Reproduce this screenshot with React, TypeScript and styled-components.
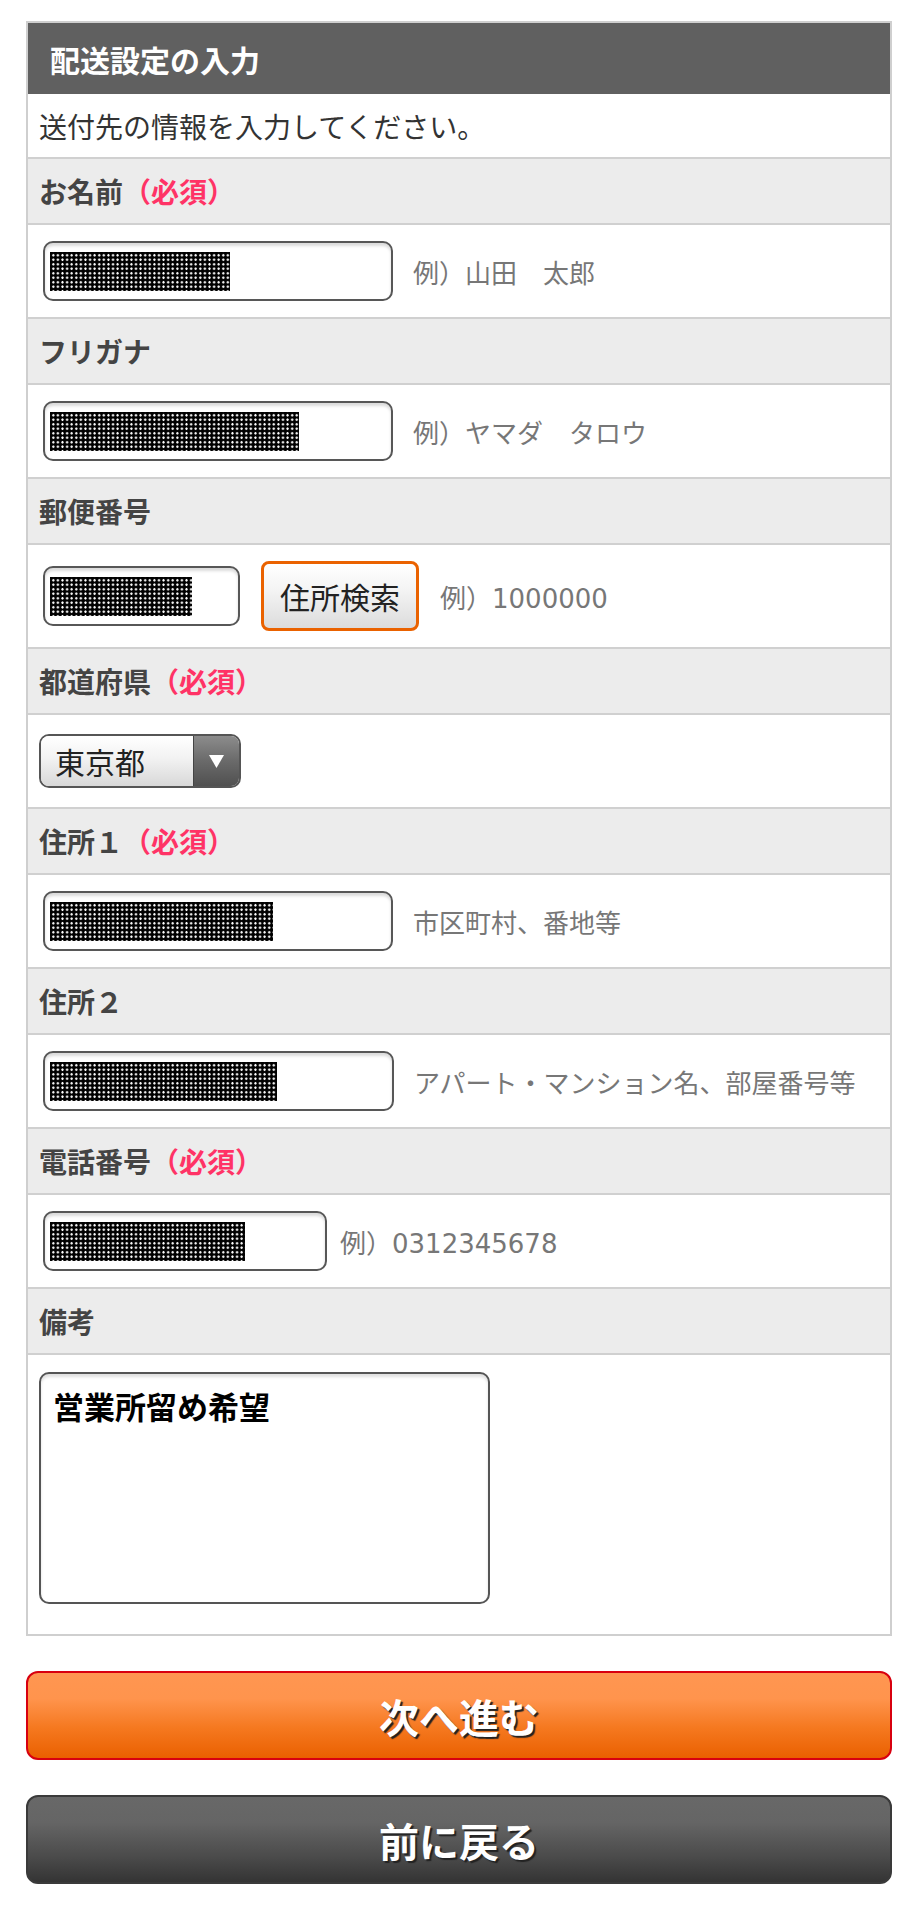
import React from 'react'
import styled, { createGlobalStyle } from 'styled-components'

const GlobalStyle = createGlobalStyle`
    * {
        box-sizing: border-box;
    }
    body {
        margin: 0;
        background: #fff;
        font-family: "Noto Sans CJK JP", "Noto Sans", sans-serif;
        color: #333;
    }
`

const Page = styled.div`
    width: 920px;
    padding: 21px 28px 24px 26px;
`

const Panel = styled.section`
    border: 2px solid #cfcfcf;
    background: #fff;
`

const PanelTitle = styled.h2`
    margin: 0;
    height: 71px;
    display: flex;
    align-items: center;
    padding-left: 22px;
    background: #606060;
    color: #fff;
    font-size: 30px;
    font-weight: 700;
`

const Intro = styled.p`
    margin: 0;
    height: 65px;
    display: flex;
    align-items: center;
    padding: 0 11px;
    border-bottom: 2px solid #d0d0d0;
    font-size: 28px;
    color: #333;
`

const FieldLabel = styled.div`
    height: 66px;
    display: flex;
    align-items: center;
    padding: 0 11px;
    background: #ececec;
    border-bottom: 2px solid #d0d0d0;
    font-size: 28px;
    font-weight: 700;
    color: #444;
`

const Required = styled.span`
    color: #ff3366;
`

const FieldRow = styled.div<{ $last?: boolean }>`
    min-height: 94px;
    display: flex;
    align-items: ${p => (p.$last ? 'flex-start' : 'center')};
    padding: ${p => (p.$last ? '17px 11px 30px' : '16px 11px')};
    border-bottom: ${p => (p.$last ? 'none' : '2px solid #d0d0d0')};
`

const TextBox = styled.div<{ $width: number }>`
    width: ${p => p.$width}px;
    height: 60px;
    margin-left: 4px;
    display: flex;
    align-items: center;
    padding: 1px 0 0 5px;
    border: 2px solid #575757;
    border-radius: 10px;
    background: #fff;
    box-shadow: inset 0 3px 3px rgba(0, 0, 0, 0.14);
    flex-shrink: 0;
`

// 入力値は伏せ字（黒地に白い点）
const Masked = styled.span<{ $width: number }>`
    display: block;
    width: ${p => p.$width}px;
    height: 39px;
    background-color: #000;
    background-image: radial-gradient(circle, #fff 0.9px, rgba(255, 255, 255, 0.6) 1.1px, transparent 1.4px);
    background-size: 4.6px 4.5px;
    background-position: 1px 1px;
`

const Hint = styled.span<{ $gap?: number }>`
    margin-left: ${p => p.$gap ?? 20}px;
    font-family: "DejaVu Sans", "Noto Sans CJK JP", sans-serif;
    font-size: 26px;
    color: #777;
    white-space: nowrap;
`

const SearchButton = styled.button`
    width: 158px;
    height: 70px;
    margin-left: 21px;
    border: 3px solid #ea6200;
    border-radius: 8px;
    background: linear-gradient(#ffffff, #f4f4f4 40%, #dcdcdc);
    font-family: inherit;
    font-size: 30px;
    color: #222;
    padding: 0;
    flex-shrink: 0;
`

const Select = styled.div`
    width: 202px;
    height: 54px;
    display: flex;
    border: 2px solid #555;
    border-radius: 10px;
    overflow: hidden;
`

const SelectValue = styled.span`
    flex: 1;
    display: flex;
    align-items: center;
    padding-left: 14px;
    background: linear-gradient(#ffffff, #f2f2f2 45%, #d8d8d8);
    font-size: 30px;
    color: #222;
`

const SelectArrow = styled.span`
    width: 46px;
    display: flex;
    align-items: center;
    justify-content: center;
    border-left: 1px solid #444;
    background: linear-gradient(#8c8c8c, #6a6a6a 50%, #505050);
`

const TextArea = styled.div`
    width: 451px;
    height: 232px;
    padding: 11px 12px;
    border: 2px solid #555;
    border-radius: 10px;
    box-shadow: inset 0 3px 3px rgba(0, 0, 0, 0.12);
    font-size: 31px;
    font-weight: 700;
    line-height: 42px;
    color: #000;
`

const ActionButton = styled.button<{ $variant: 'next' | 'back' }>`
    display: block;
    width: 866px;
    height: 89px;
    margin-top: 35px;
    border-radius: 12px;
    border: 2px solid ${p => (p.$variant === 'next' ? '#d8000f' : '#3a3a3a')};
    background: ${p =>
        p.$variant === 'next'
            ? 'linear-gradient(#ff9651 0%, #ff944d 30%, #f5781f 65%, #ea6000 100%)'
            : 'linear-gradient(#686868 0%, #656565 30%, #4b4b4b 70%, #343434 100%)'};
    font-family: inherit;
    font-size: 40px;
    font-weight: 700;
    color: #fff;
    text-shadow: 2px 2px 1px #222;
`

function ArrowDown() {
    return (
        <svg width="15" height="13" viewBox="0 0 15 13">
            <polygon points="0,0 15,0 7.5,13" fill="#fff" />
        </svg>
    )
}

function App() {
    return (
        <Page>
            <GlobalStyle />
            <Panel>
                <PanelTitle>配送設定の入力</PanelTitle>
                <Intro>送付先の情報を入力してください。</Intro>

                <FieldLabel>お名前<Required>（必須）</Required></FieldLabel>
                <FieldRow>
                    <TextBox $width={350}><Masked $width={180} /></TextBox>
                    <Hint>例）山田　太郎</Hint>
                </FieldRow>

                <FieldLabel>フリガナ</FieldLabel>
                <FieldRow>
                    <TextBox $width={350}><Masked $width={249} /></TextBox>
                    <Hint>例）ヤマダ　タロウ</Hint>
                </FieldRow>

                <FieldLabel>郵便番号</FieldLabel>
                <FieldRow>
                    <TextBox $width={197}><Masked $width={142} /></TextBox>
                    <SearchButton>住所検索</SearchButton>
                    <Hint $gap={21}>例）1000000</Hint>
                </FieldRow>

                <FieldLabel>都道府県<Required>（必須）</Required></FieldLabel>
                <FieldRow>
                    <Select>
                        <SelectValue>東京都</SelectValue>
                        <SelectArrow><ArrowDown /></SelectArrow>
                    </Select>
                </FieldRow>

                <FieldLabel>住所１<Required>（必須）</Required></FieldLabel>
                <FieldRow>
                    <TextBox $width={350}><Masked $width={223} /></TextBox>
                    <Hint>市区町村、番地等</Hint>
                </FieldRow>

                <FieldLabel>住所２</FieldLabel>
                <FieldRow>
                    <TextBox $width={351}><Masked $width={227} /></TextBox>
                    <Hint>アパート・マンション名、部屋番号等</Hint>
                </FieldRow>

                <FieldLabel>電話番号<Required>（必須）</Required></FieldLabel>
                <FieldRow>
                    <TextBox $width={284}><Masked $width={195} /></TextBox>
                    <Hint $gap={13}>例）0312345678</Hint>
                </FieldRow>

                <FieldLabel>備考</FieldLabel>
                <FieldRow $last>
                    <TextArea>営業所留め希望</TextArea>
                </FieldRow>
            </Panel>

            <ActionButton $variant="next">次へ進む</ActionButton>
            <ActionButton $variant="back">前に戻る</ActionButton>
        </Page>
    )
}

export default App
